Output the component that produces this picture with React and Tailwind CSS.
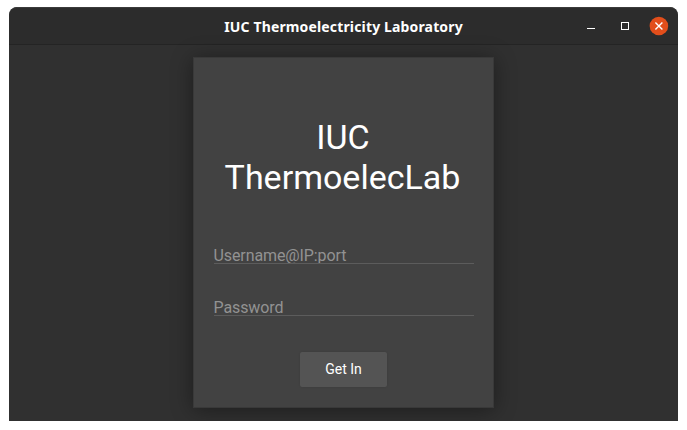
function TitleBar() {
  return (
    <header className="flex h-[38px] shrink-0 items-center rounded-t-lg border-t border-b border-t-[#3b3b3b] border-b-[#242424] bg-[#2c2c2c]">
      <div className="w-[120px]" />
      <h1 className="flex-1 whitespace-nowrap pt-[2px] text-center font-['Noto_Sans',sans-serif] text-[14px] font-bold leading-5 tracking-[0.15px] text-white">
        IUC Thermoelectricity Laboratory
      </h1>
      <div className="flex w-[120px] items-center justify-end gap-[16px] pr-[9px] text-white">
        <svg width="18" height="18" viewBox="0 0 18 18" shapeRendering="crispEdges">
          <path d="M6 11.5h8" stroke="currentColor" />
        </svg>
        <svg width="18" height="18" viewBox="0 0 18 18" shapeRendering="crispEdges">
          <rect x="6.5" y="5.5" width="7" height="7" fill="none" stroke="currentColor" />
        </svg>
        <svg width="20" height="20" viewBox="0 0 20 20">
          <circle cx="9.9" cy="10" r="9.3" fill="#e24e1b" />
          <path d="M6.4 6.5l7 7M13.4 6.5l-7 7" stroke="currentColor" strokeWidth="1.4" />
        </svg>
      </div>
    </header>
  );
}

function Field({ label, type }) {
  return (
    <input
      type={type}
      placeholder={label}
      className="block h-[20px] w-[260px] border-b border-[#5c5c5c] bg-transparent p-0 pt-[3px] font-[Roboto,sans-serif] text-[16px] leading-[16px] tracking-[-0.1px] text-white outline-none placeholder:text-[#929292]"
    />
  );
}

export default function App() {
  return (
    <div className="h-[430px] w-[687px] bg-white pl-[9px] pt-[7px] font-[Roboto,sans-serif]">
      <div className="flex h-[414px] w-[669px] flex-col overflow-hidden rounded-t-lg bg-[#303030]">
        <TitleBar />
        <main className="flex flex-1 justify-center pt-[12px]">
          <section className="flex h-[351px] w-[301px] flex-col items-center border border-[#393939] bg-[#424242] shadow-[0_2px_20px_rgba(0,0,0,0.4)]">
            <h2 className="mt-[59px] pr-[2px] text-center text-[34px] leading-[40px] text-white">
              <span className="block pl-px">IUC</span>
              <span className="block">ThermoelecLab</span>
            </h2>
            <div className="mt-[47px] flex flex-col gap-[32px]">
              <Field label="Username@IP:port" type="text" />
              <Field label="Password" type="password" />
            </div>
            <button className="mt-[36px] h-[35px] w-[87px] rounded-[2px] bg-[#545454] pb-[2px] text-[14px] font-normal leading-[32px] text-white shadow-[0_0_2px_rgba(0,0,0,0.12)]">
              Get In
            </button>
          </section>
        </main>
      </div>
    </div>
  );
}
